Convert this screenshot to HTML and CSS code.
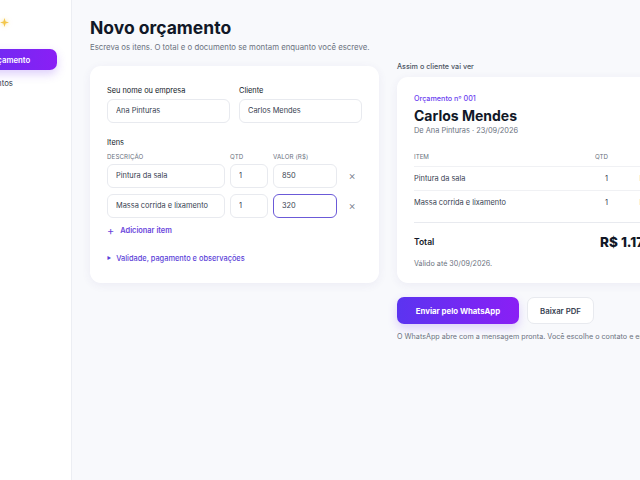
FILE: index.html
```html
<!DOCTYPE html>
<html lang="pt-BR">
<head>
    <meta charset="UTF-8">
    <meta name="viewport" content="width=device-width, initial-scale=1.0">
    <title>Novo orçamento</title>
    <link rel="stylesheet" href="styles.css">
</head>
<body>
    <div class="app">
        <aside class="sidebar">
            <div class="brand">
                <svg class="brand-mark" width="9" height="9" viewBox="0 0 10 10">
                    <path d="M5 0 L6.2 3.8 L10 5 L6.2 6.2 L5 10 L3.8 6.2 L0 5 L3.8 3.8 Z" fill="#f3c64b"/>
                </svg>
            </div>
            <nav class="nav">
                <a class="nav-item active" href="#"><span class="nav-icon"></span>Novo orçamento</a>
                <a class="nav-item" href="#"><span class="nav-icon"></span>Orçamentos</a>
            </nav>
        </aside>

        <main class="main">
            <h1>Novo orçamento</h1>
            <p class="subtitle">Escreva os itens. O total e o documento se montam enquanto você escreve.</p>

            <div class="columns">
                <form class="card editor">
                    <div class="two-cols">
                        <div class="form-group">
                            <label for="emissor">Seu nome ou empresa</label>
                            <input type="text" id="emissor" value="Ana Pinturas">
                        </div>
                        <div class="form-group">
                            <label for="cliente">Cliente</label>
                            <input type="text" id="cliente" value="Carlos Mendes">
                        </div>
                    </div>

                    <div class="items">
                        <div class="items-title">Itens</div>
                        <div class="item-row item-head">
                            <span>Descrição</span>
                            <span>Qtd</span>
                            <span>Valor (R$)</span>
                            <span></span>
                        </div>
                        <div class="item-row">
                            <input type="text" value="Pintura da sala">
                            <input type="text" value="1">
                            <input type="text" value="850">
                            <button type="button" class="remove">×</button>
                        </div>
                        <div class="item-row">
                            <input type="text" value="Massa corrida e lixamento">
                            <input type="text" value="1">
                            <input type="text" class="focused" value="320">
                            <button type="button" class="remove">×</button>
                        </div>
                        <button type="button" class="add-item"><span class="plus">+</span>Adicionar item</button>
                    </div>

                    <div class="details"><span class="caret">▶</span>Validade, pagamento e observações</div>
                </form>

                <section class="preview-col">
                    <div class="preview-label">Assim o cliente vai ver</div>
                    <div class="card doc">
                        <div class="doc-number">Orçamento nº 001</div>
                        <div class="doc-client">Carlos Mendes</div>
                        <div class="doc-meta">De Ana Pinturas · 23/09/2026</div>

                        <table class="doc-table">
                            <thead>
                                <tr><th>Item</th><th class="num">Qtd</th><th class="money">Valor</th></tr>
                            </thead>
                            <tbody>
                                <tr><td>Pintura da sala</td><td class="num">1</td><td class="money">R$ 850,00</td></tr>
                                <tr><td>Massa corrida e lixamento</td><td class="num">1</td><td class="money">R$ 320,00</td></tr>
                            </tbody>
                        </table>

                        <div class="doc-total">
                            <span>Total</span>
                            <strong>R$ 1.170,00</strong>
                        </div>
                        <div class="doc-valid">Válido até 30/09/2026.</div>
                    </div>

                    <div class="actions">
                        <button type="button" class="btn-primary">Enviar pelo WhatsApp</button>
                        <button type="button" class="btn-ghost">Baixar PDF</button>
                    </div>
                    <p class="hint">O WhatsApp abre com a mensagem pronta. Você escolhe o contato e envia.</p>
                </section>
            </div>
        </main>
    </div>
</body>
</html>
```

FILE: styles.css
```css
:root {
    --purple: #6a3ef0;
    --ink: #111827;
    --text: #374151;
    --muted: #6b7280;
    --line: #e8eaef;
    --bg: #f8f9fc;
}

* {
    box-sizing: border-box;
    margin: 0;
    padding: 0;
    font-family: Inter, 'Noto Sans', sans-serif;
}

html, body {
    height: 100%;
}

body {
    background: var(--bg);
    color: var(--text);
    overflow: hidden;
}

.app {
    display: flex;
    min-height: 100%;
    margin-left: -78px;
}

/* barra lateral */
.sidebar {
    flex: 0 0 150px;
    background: white;
    border-right: 1px solid #eceef3;
    padding: 14px;
}

.brand {
    height: 14px;
    display: flex;
    align-items: center;
}

.brand-mark {
    margin-left: 64px;
    margin-top: 2px;
    filter: drop-shadow(0 0 2px rgba(243, 198, 75, 0.6));
}

.nav {
    display: flex;
    flex-direction: column;
    gap: 2px;
    margin-top: 21px;
}

.nav-item {
    display: flex;
    align-items: center;
    gap: 10px;
    height: 21px;
    padding: 0 10px;
    font-size: 7.8px;
    color: var(--text);
    text-decoration: none;
    border-radius: 7px;
    white-space: nowrap;
}

.nav-icon {
    flex: 0 0 12px;
}

.nav-item.active {
    background: linear-gradient(90deg, #5b34f0, #8a1ff5);
    color: white;
    font-weight: 600;
    box-shadow: 0 4px 10px rgba(120, 60, 240, 0.25);
}

/* conteúdo */
.main {
    flex: 1;
    padding: 17px 18px 0 18px;
}

h1 {
    font-size: 17.5px;
    font-weight: 700;
    color: var(--ink);
    line-height: 22px;
}

.subtitle {
    font-size: 7.8px;
    color: var(--muted);
    margin-top: 3px;
}

.columns {
    display: grid;
    grid-template-columns: 289px 296px;
    gap: 18px;
    margin-top: 14px;
    align-items: start;
}

.card {
    background: white;
    border-radius: 11px;
    box-shadow: 0 2px 10px rgba(70, 60, 140, 0.07);
}

.editor {
    padding: 20px 17px 20px 17px;
}

.two-cols {
    display: grid;
    grid-template-columns: 1fr 1fr;
    gap: 9px;
}

label, .items-title {
    display: block;
    font-size: 7.4px;
    color: var(--ink);
    margin-bottom: 2px;
}

input {
    width: 100%;
    height: 24px;
    padding: 0 8px;
    border: 1px solid var(--line);
    border-radius: 6px;
    font-size: 7.4px;
    color: var(--text);
    background: white;
}

input.focused {
    border: 1.5px solid #6b5ad8;
}

.items {
    margin-top: 15px;
}

.items-title {
    margin-bottom: 5px;
}

.item-row {
    display: grid;
    grid-template-columns: 118px 38px 64px 1fr;
    gap: 5px;
    align-items: center;
    height: 24px;
    margin-bottom: 6px;
}

.item-row.item-head {
    height: 9px;
    margin-bottom: 3px;
}

.item-head span {
    font-size: 6.2px;
    color: var(--muted);
    text-transform: uppercase;
    letter-spacing: 0.1px;
}

.remove {
    height: 24px;
    border: none;
    background: none;
    font-size: 11px;
    line-height: 24px;
    font-weight: 300;
    color: #6b7280;
    cursor: pointer;
}

.add-item {
    display: flex;
    align-items: center;
    border: none;
    background: none;
    color: #6a45dc;
    font-size: 7.4px;
    font-weight: 600;
    margin-top: 2px;
    cursor: pointer;
}

.plus {
    font-size: 11px;
    font-weight: 400;
    margin-right: 6px;
}

.details {
    margin-top: 16px;
    font-size: 7.4px;
    color: #5b3fd8;
    font-weight: 500;
}

.caret {
    font-size: 4.5px;
    margin-right: 5px;
    vertical-align: 1px;
}

/* pré-visualização */
.preview-label {
    font-size: 7.2px;
    color: #4b5563;
    font-weight: 500;
    margin-bottom: 6px;
    margin-top: -4px;
}

.doc {
    padding: 17px 17px 15px 17px;
}

.doc-number {
    font-size: 7.2px;
    color: var(--purple);
    font-weight: 500;
}

.doc-client {
    font-size: 14px;
    font-weight: 700;
    color: var(--ink);
    margin-top: 4px;
}

.doc-meta {
    font-size: 7.4px;
    color: var(--muted);
    margin-top: 2px;
}

.doc-table {
    width: 100%;
    border-collapse: collapse;
    margin-top: 14px;
}

.doc-table th {
    font-size: 6.2px;
    font-weight: 400;
    color: var(--muted);
    text-transform: uppercase;
    text-align: left;
    padding: 4px 0 6px;
    border-bottom: 1px solid #f0f1f4;
}

.doc-table td {
    font-size: 7.4px;
    color: var(--text);
    padding: 7px 0 7px;
    border-bottom: 1px solid #f0f1f4;
}

.doc-table tbody tr:last-child td {
    border-bottom: none;
    padding-bottom: 15px;
}

.doc-table .num {
    text-align: right;
    width: 30px;
}

.doc-table .money {
    text-align: right;
    width: 68px;
}

.doc-total {
    display: flex;
    justify-content: space-between;
    align-items: center;
    border-top: 1px solid var(--line);
    padding-top: 11px;
}

.doc-total span {
    font-size: 8.5px;
    font-weight: 600;
    color: var(--ink);
}

.doc-total strong {
    font-size: 13.5px;
    font-weight: 800;
    color: var(--ink);
}

.doc-valid {
    font-size: 7.2px;
    color: var(--muted);
    margin-top: 9px;
}

.actions {
    display: flex;
    gap: 8px;
    margin-top: 14px;
}

.btn-primary, .btn-ghost {
    height: 27px;
    border-radius: 7px;
    font-size: 7.8px;
    font-weight: 700;
    cursor: pointer;
}

.btn-primary {
    width: 122px;
    border: none;
    color: white;
    background: linear-gradient(90deg, #5b34f0, #8a1ff5);
    box-shadow: 0 4px 10px rgba(120, 60, 240, 0.22);
}

.btn-ghost {
    width: 67px;
    background: white;
    border: 1px solid var(--line);
    color: var(--text);
    font-weight: 600;
}

.hint {
    font-size: 7.2px;
    color: var(--muted);
    margin-top: 8px;
    white-space: nowrap;
}
```
